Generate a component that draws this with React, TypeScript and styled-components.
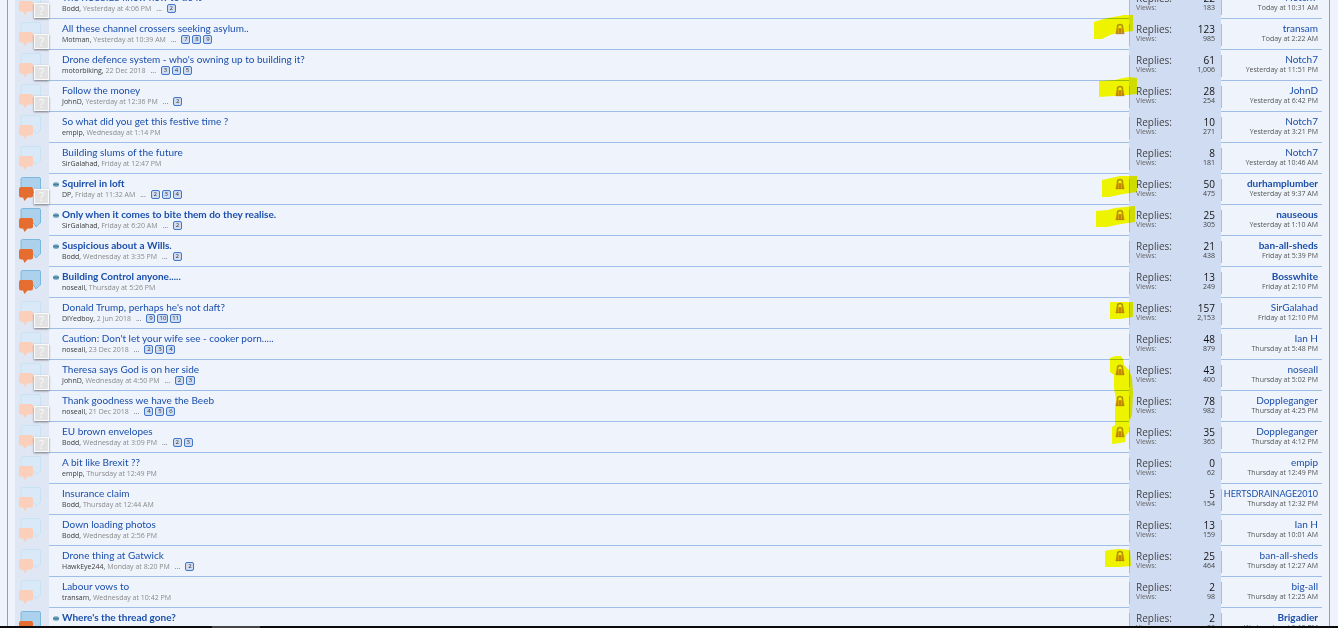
import React from "react";
import styled, { createGlobalStyle } from "styled-components";

const Global = createGlobalStyle`
  * { box-sizing: border-box; }
  body { margin: 0; background: #eef3fc; font-family: "Open Sans", "Noto Sans", sans-serif; }
`;

type Thread = {
  title: string;
  author: string;
  date: string;
  pages?: number[];
  avatar?: boolean;
  unread?: boolean;
  locked?: boolean;
  mark?: string;
  replies: string;
  views: string;
  last: string;
  lastDate: string;
};

const threads: Thread[] = [
  { title: "The RUSSIES know how to do it", author: "Bodd", date: "Yesterday at 4:06 PM", pages: [2], avatar: true, replies: "22", views: "183", last: "Notch7", lastDate: "Today at 10:31 AM" },
  { title: "All these channel crossers seeking asylum..", author: "Motman", date: "Yesterday at 10:39 AM", pages: [7, 8, 9], avatar: true, locked: true, mark: "M4 3 L10 1 L18 -1 L34 -4 H43 V12 L27 14 L20 16 L12 20 H4Z", replies: "123", views: "985", last: "transam", lastDate: "Today at 2:22 AM" },
  { title: "Drone defence system - who's owning up to building it?", author: "motorbiking", date: "22 Dec 2018", pages: [3, 4, 5], avatar: true, replies: "61", views: "1,006", last: "Notch7", lastDate: "Yesterday at 11:51 PM" },
  { title: "Follow the money", author: "JohnD", date: "Yesterday at 12:36 PM", pages: [2], avatar: true, locked: true, mark: "M9 0 L25 -1 L33 -3 L39 -4 L47 -3 V13 L37 14 L23 15 L9 16Z", replies: "28", views: "254", last: "JohnD", lastDate: "Yesterday at 6:42 PM" },
  { title: "So what did you get this festive time ?", author: "empip", date: "Wednesday at 1:14 PM", replies: "10", views: "271", last: "Notch7", lastDate: "Yesterday at 3:21 PM" },
  { title: "Building slums of the future", author: "SirGalahad", date: "Friday at 12:47 PM", replies: "8", views: "181", last: "Notch7", lastDate: "Yesterday at 10:46 AM" },
  { title: "Squirrel in loft", author: "DP", date: "Friday at 11:32 AM", pages: [2, 3, 4], avatar: true, unread: true, locked: true, mark: "M12 6 L21 4 L30 2 H47 V18 L33 20 L19 23 H12Z", replies: "50", views: "475", last: "durhamplumber", lastDate: "Yesterday at 9:37 AM" },
  { title: "Only when it comes to bite them do they realise.", author: "SirGalahad", date: "Friday at 6:20 AM", pages: [2], unread: true, locked: true, mark: "M6 6 L18 5 L25 3 L45 1 V17 L31 19 L17 22 H6Z", replies: "25", views: "305", last: "nauseous", lastDate: "Yesterday at 1:10 AM" },
  { title: "Suspicious about a Wills.", author: "Bodd", date: "Wednesday at 3:35 PM", pages: [2], unread: true, replies: "21", views: "438", last: "ban-all-sheds", lastDate: "Friday at 5:39 PM" },
  { title: "Building Control anyone.....", author: "noseall", date: "Thursday at 5:26 PM", unread: true, replies: "13", views: "249", last: "Bosswhite", lastDate: "Friday at 2:10 PM" },
  { title: "Donald Trump, perhaps he's not daft?", author: "DIYedboy", date: "2 Jun 2018", pages: [9, 10, 11], avatar: true, locked: true, mark: "M20 4 H43 V19 L30 21 H20Z", replies: "157", views: "2,153", last: "SirGalahad", lastDate: "Friday at 12:10 PM" },
  { title: "Caution: Don't let your wife see - cooker porn.....", author: "noseall", date: "23 Dec 2018", pages: [2, 3, 4], avatar: true, replies: "48", views: "879", last: "Ian H", lastDate: "Thursday at 5:48 PM" },
  { title: "Theresa says God is on her side", author: "JohnD", date: "Wednesday at 4:50 PM", pages: [2, 3], avatar: true, locked: true, mark: "M20 -2 L25 -4 H31 L33 -1 L34 5 L39 10 L42 18 L43 33 L42 55 L39 62 V72 L36 75 L35 82 L30 83 L22 84 V67 L25 65 V50 L26 40 L24 28 V15 L20 12Z", replies: "43", views: "400", last: "noseall", lastDate: "Thursday at 5:02 PM" },
  { title: "Thank goodness we have the Beeb", author: "noseall", date: "21 Dec 2018", pages: [4, 5, 6], avatar: true, locked: true, replies: "78", views: "982", last: "Doppleganger", lastDate: "Thursday at 4:25 PM" },
  { title: "EU brown envelopes", author: "Bodd", date: "Wednesday at 3:09 PM", pages: [2, 3], avatar: true, locked: true, replies: "35", views: "365", last: "Doppleganger", lastDate: "Thursday at 4:12 PM" },
  { title: "A bit like Brexit ??", author: "empip", date: "Thursday at 12:49 PM", replies: "0", views: "62", last: "empip", lastDate: "Thursday at 12:49 PM" },
  { title: "Insurance claim", author: "Bodd", date: "Thursday at 12:44 AM", replies: "5", views: "154", last: "HERTSDRAINAGE2010", lastDate: "Thursday at 12:32 PM" },
  { title: "Down loading photos", author: "Bodd", date: "Wednesday at 2:56 PM", replies: "13", views: "159", last: "Ian H", lastDate: "Thursday at 10:01 AM" },
  { title: "Drone thing at Gatwick", author: "HawkEye244", date: "Monday at 8:20 PM", pages: [2], locked: true, mark: "M15 5 L19 4 L29 3 L40 4 L41 20 L29 21 H15Z", replies: "25", views: "464", last: "ban-all-sheds", lastDate: "Thursday at 12:27 AM" },
  { title: "Labour vows to", author: "transam", date: "Wednesday at 10:42 PM", replies: "2", views: "98", last: "big-all", lastDate: "Thursday at 12:25 AM" },
  { title: "Where's the thread gone?", author: "Brigadier", date: "Wednesday at 7:30 PM", unread: true, replies: "2", views: "86", last: "Brigadier", lastDate: "Wednesday at 9:15 PM" },
];

const Page = styled.div`
  height: 100vh;
  overflow: hidden;
  padding: 0 8px 0 7px;
`;

const Panel = styled.main`
  border: solid #7ba3dc;
  border-width: 0 1px;
  padding: 0 7px;
`;

const List = styled.ol`
  list-style: none;
  margin: -12px 0 0;
  padding: 0;
`;

const Row = styled.li`
  position: relative;
  display: flex;
  height: 31px;
`;

const StatusCell = styled.div`
  position: relative;
  flex: none;
  width: 34px;
  background: #dfe7f5;
`;

const Bubbles = styled.svg`
  display: block;
  margin: 3px 0 0 3px;
`;

const Avatar = styled.span`
  position: absolute;
  right: 0;
  bottom: 1px;
  z-index: 1;
  width: 15px;
  height: 15px;
  border: 1px solid #fafafa;
  background: #e2e2e2;
  box-shadow: 0 1px 2px rgba(0, 0, 0, 0.5);
  color: #fafafa;
  font-size: 12px;
  line-height: 13px;
  text-align: center;
`;

const MainCell = styled.div`
  position: relative;
  flex: 1;
  min-width: 0;
  display: flex;
  align-items: flex-start;
  justify-content: space-between;
  padding: 3px 4px 0 13px;
  border-bottom: 1px solid #9fbde6;
`;

const UnreadDot = styled.span`
  position: absolute;
  left: 4px;
  top: 8px;
  width: 6px;
  height: 5px;
  border-radius: 3px;
  background: linear-gradient(#a9cbe0, #44809f 50%, #9cc0d8);
`;

const Title = styled.h3<{ $unread?: boolean }>`
  margin: 0;
  font-family: Lato, "Open Sans", sans-serif;
  font-size: 10px;
  line-height: 13px;
  font-weight: ${(p) => (p.$unread ? 700 : 400)};
  white-space: nowrap;
`;

const Link = styled.a`
  color: #1b4fab;
  text-decoration: none;
`;

const Meta = styled.div`
  display: flex;
  align-items: center;
  font-size: 7px;
  line-height: 9px;
  color: #8a8a8a;
  white-space: nowrap;
`;

const Author = styled.a`
  color: #3c3c3c;
  text-decoration: none;
`;

const Pages = styled.nav`
  display: flex;
  gap: 2px;
  margin-left: 5px;
`;

const Dots = styled.span`
  margin-right: 3px;
  color: #666;
`;

const PageLink = styled.a`
  min-width: 9px;
  height: 9px;
  padding: 0 1px;
  border: 1px solid #4176c9;
  border-radius: 2px;
  background: #cfdcf2;
  color: #333;
  font-size: 6px;
  line-height: 7px;
  text-align: center;
  text-decoration: none;
`;

const Lock = styled.svg`
  flex: none;
  margin-top: 1px;
`;

const Stats = styled.dl`
  flex: none;
  width: 92px;
  margin: 0;
  padding: 5px 0 4px;
  background: #d0dcf2;
`;

const StatsInner = styled.div`
  height: 22px;
  padding: 0 6px;
  border-left: 1px solid #9fbde6;
`;

const Stat = styled.div<{ $minor?: boolean }>`
  display: flex;
  justify-content: space-between;
  font-size: ${(p) => (p.$minor ? 7 : 10)}px;
  line-height: 10px;
  color: ${(p) => (p.$minor ? "#444" : "#111")};
  dt { color: ${(p) => (p.$minor ? "#666" : "#444")}; }
  dd { margin: 0; }
`;

const LastCell = styled.div`
  flex: none;
  width: 101px;
  padding-top: 5px;
  border-bottom: 1px solid #9fbde6;
`;

const LastInner = styled.div`
  height: 22px;
  padding-right: 4px;
  border-left: 1px solid #9fbde6;
  text-align: right;
  white-space: nowrap;
`;

const LastName = styled.div<{ $unread?: boolean; $long?: boolean }>`
  font-family: Lato, "Open Sans", sans-serif;
  font-size: ${(p) => (p.$long ? 9 : 10)}px;
  line-height: 9px;
  font-weight: ${(p) => (p.$unread ? 700 : 400)};
`;

const LastDate = styled.div`
  margin-top: 1px;
  font-size: 7px;
  line-height: 10px;
  color: #555;
`;

const Highlight = styled.svg`
  position: absolute;
  top: 0;
  right: 182px;
  z-index: 2;
  overflow: visible;
  mix-blend-mode: multiply;
  pointer-events: none;
`;

const Taskbar = styled.div`
  position: fixed;
  left: 0;
  right: 0;
  bottom: 0;
  z-index: 3;
  height: 2px;
  padding-left: 212px;
  background: #0b0b0b;
`;

const TaskItem = styled.div`
  width: 48px;
  height: 2px;
  background: #444;
`;

function StatusIcon({ unread }: { unread?: boolean }) {
  return (
    <Bubbles width="24" height="27" viewBox="0 0 24 27" aria-hidden="true">
      <path
        d="M4.500 0.500H21Q22.500 0.500 22.500 2V14Q22.500 15.500 21.500 15.500L18 19L16 15.500H4.500Q3 15.500 3 14V2Q3 0.500 4.500 0.500Z"
        fill={unread ? "#abd1ec" : "#d9e9f7"}
        stroke={unread ? "#7ab8df" : "#c8e2f3"}
      />
      <path
        d="M3 10H13Q15 10 15 12V18.500Q15 20.500 13 20.500H9.500L6.500 24L5 20.500H3Q1 20.500 1 18.500V12Q1 10 3 10Z"
        fill={unread ? "#e56d30" : "#fbcfba"}
      />
    </Bubbles>
  );
}

function LockIcon() {
  return (
    <Lock width="10" height="12" viewBox="0 0 10 12" role="img" aria-label="Locked">
      <path d="M2.500 5V4Q2.500 1.500 5 1.500Q7.500 1.500 7.500 4V5" fill="none" stroke="#b5935c" strokeWidth="1.600" />
      <path d="M1.500 5H8.500L9.500 11H0.500Z" fill="#cc9638" />
      <path d="M2 7H8M1.500 9H8.500M1 10.700H9" stroke="#a8742a" strokeWidth="0.700" />
      <path d="M3.500 5V10.500M6.500 5V10.500" stroke="#dcb060" strokeWidth="0.800" />
    </Lock>
  );
}

export default function App() {
  return (
    <Page>
      <Global />
      <Panel>
        <List>
          {threads.map((t) => (
            <Row key={t.title}>
              <StatusCell>
                <StatusIcon unread={t.unread} />
                {t.avatar && <Avatar>?</Avatar>}
              </StatusCell>
              <MainCell>
                {t.unread && <UnreadDot />}
                <div>
                  <Title $unread={t.unread}>
                    <Link href="#">{t.title}</Link>
                  </Title>
                  <Meta>
                    <span>
                      <Author href="#">{t.author},</Author> {t.date}
                    </span>
                    {t.pages && (
                      <Pages>
                        <Dots>...</Dots>
                        {t.pages.map((n) => (
                          <PageLink key={n} href="#">{n}</PageLink>
                        ))}
                      </Pages>
                    )}
                  </Meta>
                </div>
                {t.locked && <LockIcon />}
              </MainCell>
              <Stats>
                <StatsInner>
                  <Stat><dt>Replies:</dt><dd>{t.replies}</dd></Stat>
                  <Stat $minor><dt>Views:</dt><dd>{t.views}</dd></Stat>
                </StatsInner>
              </Stats>
              <LastCell>
                <LastInner>
                  <LastName $unread={t.unread} $long={t.last.length > 15}>
                    <Link href="#">{t.last}</Link>
                  </LastName>
                  <LastDate>{t.lastDate}</LastDate>
                </LastInner>
              </LastCell>
              {t.mark && (
                <Highlight width="50" height="30" aria-hidden="true">
                  <path d={t.mark} fill="#ffff00" />
                </Highlight>
              )}
            </Row>
          ))}
        </List>
      </Panel>
      <Taskbar><TaskItem /></Taskbar>
    </Page>
  );
}
